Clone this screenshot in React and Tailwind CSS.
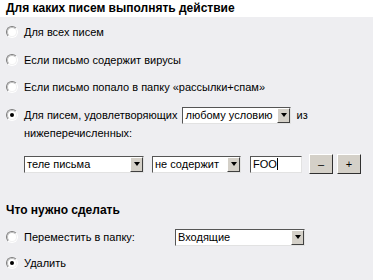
import React from "react";

function Radio({ checked }) {
  return (
    <span className="flex-none w-[12px] h-[12px] rounded-full border border-t-[#7c7c7c] border-l-[#7c7c7c] border-b-white border-r-white">
      <span className="flex w-full h-full items-center justify-center rounded-full bg-white border border-t-[#bdbdbd] border-l-[#bdbdbd] border-b-[#f2f2f2] border-r-[#f2f2f2]">
        {checked && <span className="w-[4px] h-[4px] rounded-full bg-black" />}
      </span>
    </span>
  );
}

function Select({ value, className }) {
  return (
    <div
      className={
        "flex h-[17px] bg-white border border-t-[#555] border-l-[#555] border-b-[#e2e2e2] border-r-[#e2e2e2] " +
        className
      }
    >
      <span className="flex-1 pl-[2px] text-[11px] leading-[15px] text-black whitespace-nowrap overflow-hidden">
        {value}
      </span>
      <span className="flex-none w-[13px] h-[15px] flex items-center justify-center bg-[#d4d0c8] border border-t-white border-l-white border-b-[#404040] border-r-[#404040]">
        <span className="w-0 h-0 border-l-[3px] border-r-[3px] border-t-[4px] border-l-transparent border-r-transparent border-t-black" />
      </span>
    </div>
  );
}

function Button({ children }) {
  return (
    <button className="flex-none w-[24px] h-[20px] flex items-center justify-center bg-[#d4d0c8] border border-t-white border-l-white border-b-[#303030] border-r-[#303030] text-[11px] text-black leading-none">
      {children}
    </button>
  );
}

export default function App() {
  return (
    <div
      className="w-[373px] h-[280px] bg-[#eeeef1] text-[11px] text-black overflow-hidden"
      style={{ fontFamily: '"Liberation Sans", Arial, sans-serif' }}
    >
      {/* header */}
      <div className="h-[17px] bg-white pl-[6px] text-[12px] font-bold leading-[17px]">
        Для каких писем выполнять действие
      </div>

      <div className="mt-[8px] h-[14px] flex items-center pl-[6px] gap-[6px]">
        <Radio />
        <span>Для всех писем</span>
      </div>
      <div className="mt-[14px] h-[14px] flex items-center pl-[6px] gap-[6px]">
        <Radio />
        <span>Если письмо содержит вирусы</span>
      </div>
      <div className="mt-[13px] h-[14px] flex items-center pl-[6px] gap-[6px]">
        <Radio />
        <span>Если письмо попало в папку «рассылки+спам»</span>
      </div>
      <div className="mt-[13px] h-[16px] flex items-center pl-[6px] gap-[6px]">
        <Radio checked />
        <span>Для писем, удовлетворяющих</span>
        <Select value="любому условию" className="w-[109px] -ml-[1px]" />
        <span className="ml-[-1px]">из</span>
      </div>
      <div className="h-[20px] flex items-center pl-[24px]">нижеперечисленных:</div>

      {/* conditions */}
      <div className="mt-[11px] h-[20px] flex items-center pl-[24px]">
        <Select value="теле письма" className="w-[120px]" />
        <Select value="не содержит" className="w-[89px] ml-[8px]" />
        <div className="ml-[9px] w-[52px] h-[17px] flex items-center bg-white border border-t-[#555] border-l-[#555] border-b-[#e2e2e2] border-r-[#e2e2e2] pl-[2px] text-[11px]">
          FOO
          <span className="w-px h-[12px] bg-black" />
        </div>
        <div className="ml-[7px] flex gap-[4px]">
          <Button>–</Button>
          <Button>+</Button>
        </div>
      </div>

      <div className="mt-[29px] h-[14px] flex items-center pl-[6px] text-[12px] font-bold">
        Что нужно сделать
      </div>
      <div className="mt-[12px] h-[16px] flex items-center pl-[6px]">
        <Radio />
        <span className="ml-[6px] w-[151px]">Переместить в папку:</span>
        <Select value="Входящие" className="w-[130px]" />
      </div>
      <div className="mt-[11px] h-[14px] flex items-center pl-[6px] gap-[6px]">
        <Radio checked />
        <span>Удалить</span>
      </div>
    </div>
  );
}
